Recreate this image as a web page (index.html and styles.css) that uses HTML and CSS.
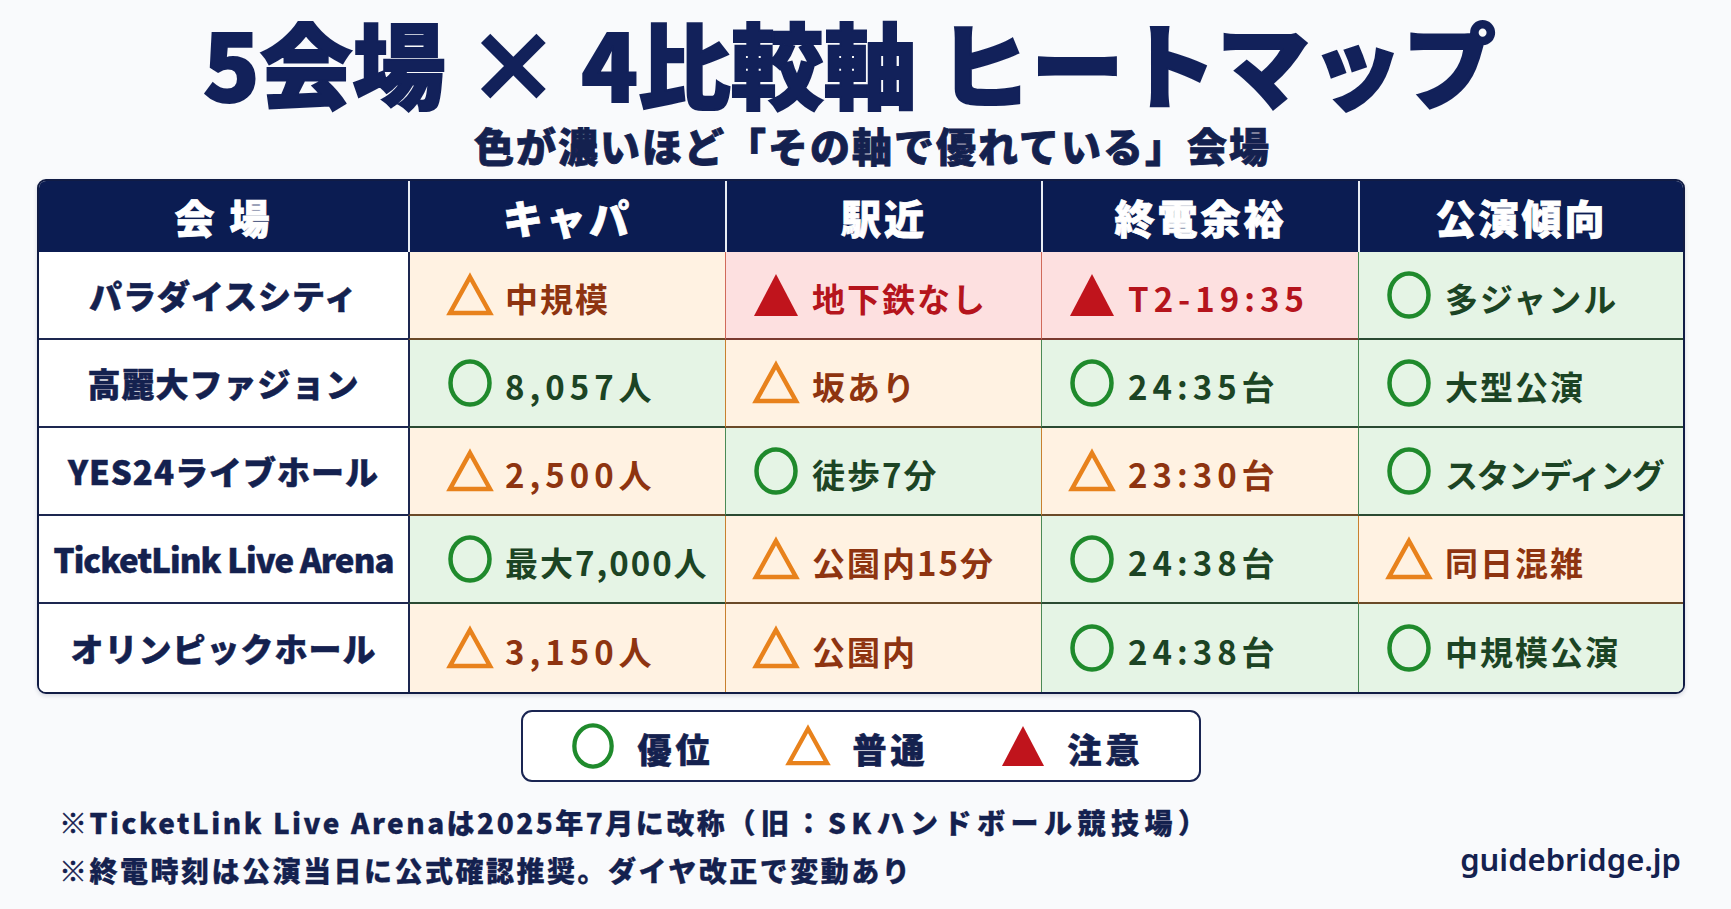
FILE: index.html
```html
<!DOCTYPE html>
<html lang="ja">
<head>
<meta charset="utf-8">
<title>5会場 × 4比較軸 ヒートマップ</title>
<link rel="stylesheet" href="styles.css">
</head>
<body>
<div class="page">
  <h1 class="title">5会場 × 4比較軸 ヒートマップ</h1>
  <p class="subtitle">色が濃いほど「その軸で優れている」会場</p>

  <div class="table">
    <div class="th first">会 場</div>
    <div class="th">キャパ</div>
    <div class="th">駅近</div>
    <div class="th">終電余裕</div>
    <div class="th">公演傾向</div>

    <div class="venue">パラダイスシティ</div>
    <div class="cell mid c2"><svg class="ico" viewBox="0 0 46 44"><polygon points="23,4 43,40 3,40" class="tri"/></svg><span>中規模</span></div>
    <div class="cell bad"><svg class="ico" viewBox="0 0 46 44"><polygon points="23,1 45,43 1,43" class="ftri"/></svg><span>地下鉄なし</span></div>
    <div class="cell bad"><svg class="ico" viewBox="0 0 46 44"><polygon points="23,1 45,43 1,43" class="ftri"/></svg><span class="num">T2-19:35</span></div>
    <div class="cell good"><svg class="ico" viewBox="0 0 46 50"><ellipse cx="23" cy="25" rx="19.5" ry="21.5" class="circ"/></svg><span>多ジャンル</span></div>

    <div class="venue">高麗大ファジョン</div>
    <div class="cell good c2"><svg class="ico" viewBox="0 0 46 50"><ellipse cx="23" cy="25" rx="19.5" ry="21.5" class="circ"/></svg><span class="num">8,057人</span></div>
    <div class="cell mid"><svg class="ico" viewBox="0 0 46 44"><polygon points="23,4 43,40 3,40" class="tri"/></svg><span>坂あり</span></div>
    <div class="cell good"><svg class="ico" viewBox="0 0 46 50"><ellipse cx="23" cy="25" rx="19.5" ry="21.5" class="circ"/></svg><span class="num">24:35台</span></div>
    <div class="cell good"><svg class="ico" viewBox="0 0 46 50"><ellipse cx="23" cy="25" rx="19.5" ry="21.5" class="circ"/></svg><span>大型公演</span></div>

    <div class="venue">YES24ライブホール</div>
    <div class="cell mid c2"><svg class="ico" viewBox="0 0 46 44"><polygon points="23,4 43,40 3,40" class="tri"/></svg><span class="num">2,500人</span></div>
    <div class="cell good"><svg class="ico" viewBox="0 0 46 50"><ellipse cx="23" cy="25" rx="19.5" ry="21.5" class="circ"/></svg><span>徒歩7分</span></div>
    <div class="cell mid"><svg class="ico" viewBox="0 0 46 44"><polygon points="23,4 43,40 3,40" class="tri"/></svg><span class="num">23:30台</span></div>
    <div class="cell good"><svg class="ico" viewBox="0 0 46 50"><ellipse cx="23" cy="25" rx="19.5" ry="21.5" class="circ"/></svg><span class="tight">スタンディング</span></div>

    <div class="venue latin">TicketLink Live Arena</div>
    <div class="cell good c2"><svg class="ico" viewBox="0 0 46 50"><ellipse cx="23" cy="25" rx="19.5" ry="21.5" class="circ"/></svg><span class="num narrow">最大7,000人</span></div>
    <div class="cell mid"><svg class="ico" viewBox="0 0 46 44"><polygon points="23,4 43,40 3,40" class="tri"/></svg><span>公園内15分</span></div>
    <div class="cell good"><svg class="ico" viewBox="0 0 46 50"><ellipse cx="23" cy="25" rx="19.5" ry="21.5" class="circ"/></svg><span class="num">24:38台</span></div>
    <div class="cell mid"><svg class="ico" viewBox="0 0 46 44"><polygon points="23,4 43,40 3,40" class="tri"/></svg><span>同日混雑</span></div>

    <div class="venue last">オリンピックホール</div>
    <div class="cell mid c2 last"><svg class="ico" viewBox="0 0 46 44"><polygon points="23,4 43,40 3,40" class="tri"/></svg><span class="num">3,150人</span></div>
    <div class="cell mid last"><svg class="ico" viewBox="0 0 46 44"><polygon points="23,4 43,40 3,40" class="tri"/></svg><span>公園内</span></div>
    <div class="cell good last"><svg class="ico" viewBox="0 0 46 50"><ellipse cx="23" cy="25" rx="19.5" ry="21.5" class="circ"/></svg><span class="num">24:38台</span></div>
    <div class="cell good last"><svg class="ico" viewBox="0 0 46 50"><ellipse cx="23" cy="25" rx="19.5" ry="21.5" class="circ"/></svg><span>中規模公演</span></div>
  </div>

  <div class="legend">
    <div class="litem"><svg class="lico" viewBox="0 0 46 50"><ellipse cx="23" cy="25" rx="19.5" ry="21.5" class="circ"/></svg><span>優位</span></div>
    <div class="litem"><svg class="lico" viewBox="0 0 46 44"><polygon points="23,4 43,40 3,40" class="tri"/></svg><span>普通</span></div>
    <div class="litem"><svg class="lico" viewBox="0 0 46 44"><polygon points="23,1 45,43 1,43" class="ftri"/></svg><span>注意</span></div>
  </div>

  <div class="footer">
    <div class="notes">
      <p class="note">※TicketLink Live Arenaは2025年7月に改称<span class="paren">（旧：SKハンドボール競技場）</span></p>
      <p class="note">※終電時刻は公演当日に公式確認推奨。ダイヤ改正で変動あり</p>
    </div>
    <div class="brand">guidebridge.jp</div>
  </div>
</div>
</body>
</html>
```

FILE: styles.css
```css
* { box-sizing: border-box; }
html, body { margin: 0; padding: 0; }
body {
  width: 1731px;
  height: 909px;
  background: #f9fafc;
  font-family: "Noto Sans CJK JP", "Noto Sans", sans-serif;
  color: #14214f;
  overflow: hidden;
}
.page {
  display: flex;
  flex-direction: column;
  align-items: center;
  padding-top: 8px;
}
.title {
  margin: 0 32px 0 0;
  font-size: 93px;
  line-height: 108px;
  font-weight: 900;
  color: #12215a;
  -webkit-text-stroke: 2px #12215a;
  letter-spacing: 0;
  white-space: nowrap;
}
.subtitle {
  margin: 4px 0 0 14px;
  font-size: 40px;
  line-height: 50px;
  font-weight: 900;
  letter-spacing: 2px;
  color: #14214f;
  -webkit-text-stroke: 0.8px #14214f;
  white-space: nowrap;
}
.table {
  align-self: flex-start;
  margin: 9px 0 0 37px;
  width: 1648px;
  display: grid;
  grid-template-columns: 369px 317px 316px 317px 1fr;
  grid-template-rows: 71px repeat(5, 88px);
  border: 2px solid #111c45;
  border-radius: 9px;
  overflow: hidden;
  background: #fff;
  box-shadow: 0 2px 4px rgba(20, 30, 70, 0.15);
}
.th {
  background: #0b1c52;
  color: #fff;
  font-size: 40px;
  font-weight: 900;
  letter-spacing: 3px;
  -webkit-text-stroke: 0.8px #fff;
  display: flex;
  align-items: center;
  justify-content: center;
  border-left: 2px solid #e8ecf4;
}
.th.first { border-left: none; }
.venue {
  display: flex;
  align-items: center;
  justify-content: center;
  font-size: 33px;
  font-weight: 900;
  letter-spacing: 1px;
  color: #14214f;
  -webkit-text-stroke: 0.5px #14214f;
  background: #fff;
  border-bottom: 2px solid #1d2750;
  white-space: nowrap;
}
.venue.latin {
  letter-spacing: -0.9px;
  font-weight: 800;
}
.cell {
  display: flex;
  align-items: center;
  gap: 13px;
  padding-left: 27px;
  font-size: 33px;
  font-weight: 700;
  letter-spacing: 2px;
  white-space: nowrap;
  border-left: 1.5px solid #c8802e;
  border-bottom: 2px solid #5a4a30;
}
.cell.c2 { padding-left: 37px; gap: 12px; border-left: 2px solid #1d2750; }
.last { border-bottom: none !important; }
.cell span { padding-top: 6px; }
.cell .num { letter-spacing: 5px; }
.cell .num.narrow { letter-spacing: 2px; }
.cell .tight { letter-spacing: -1.5px; }
.mid { background: #fff2e2; color: #8e3410; border-left-color: #c8802e; border-bottom-color: #6b4a28; }
.bad { background: #fde0e0; color: #b5141c; border-left-color: #d06a5a; border-bottom-color: #7a3a30; }
.good { background: #e5f4e5; color: #1c4424; border-left-color: #4a8a55; border-bottom-color: #2a4a32; }
.ico { width: 46px; height: 50px; flex: none; overflow: visible; }
.tri { fill: none; stroke: #e8821c; stroke-width: 4.5; stroke-linejoin: miter; }
.ftri { fill: #c0141c; }
.circ { fill: none; stroke: #1f8a2c; stroke-width: 4.5; }

.legend {
  margin-top: 16px;
  margin-left: -10px;
  width: 680px;
  height: 72px;
  border: 2px solid #1a2552;
  border-radius: 11px;
  background: #fff;
  display: flex;
  align-items: center;
  padding-left: 48px;
  gap: 72px;
}
.litem {
  display: flex;
  align-items: center;
  gap: 23px;
  font-size: 34px;
  font-weight: 900;
  letter-spacing: 4px;
  color: #14214f;
  -webkit-text-stroke: 0.6px #14214f;
}
.litem span { padding-top: 4px; }
.lico { width: 44px; height: 48px; flex: none; overflow: visible; }

.footer {
  width: 1731px;
  display: flex;
  justify-content: space-between;
  align-items: flex-end;
  padding: 0 50px 0 59px;
  margin-top: 16px;
}
.note {
  margin: 0;
  font-size: 28px;
  line-height: 48px;
  font-weight: 800;
  letter-spacing: 2.5px;
  color: #14214f;
  -webkit-text-stroke: 0.3px #14214f;
  white-space: nowrap;
}
.note .paren { letter-spacing: 5.5px; }
.brand {
  font-family: "Noto Sans", "Open Sans", sans-serif;
  font-size: 31px;
  font-weight: 600;
  color: #14214f;
  padding-bottom: 14px;
}
```
